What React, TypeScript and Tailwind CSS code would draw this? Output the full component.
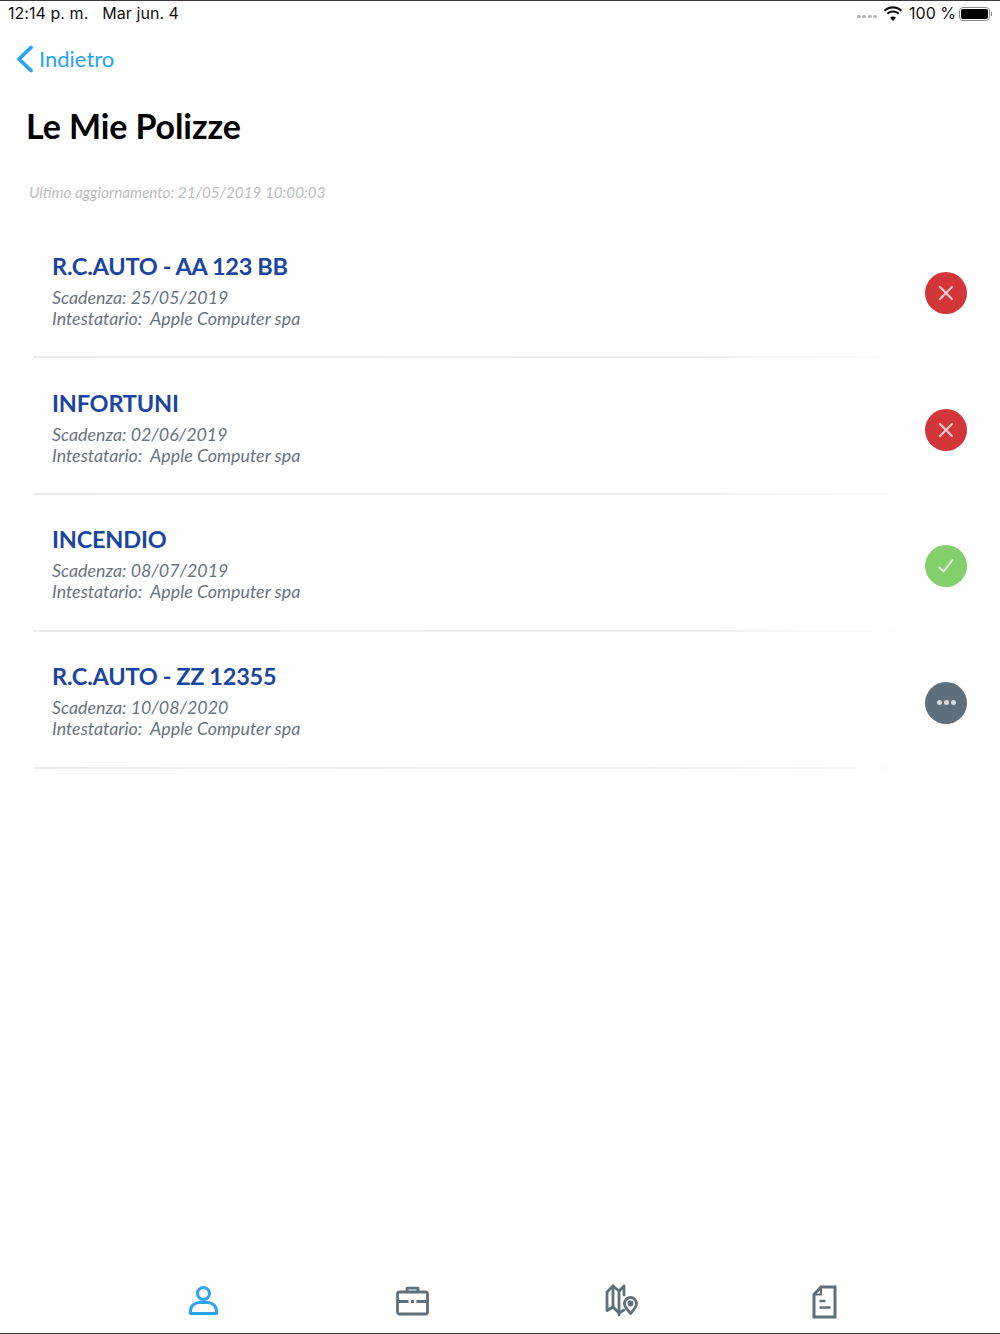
import React from "react";

const policies = [
  { title: "R.C.AUTO - AA 123 BB", date: "25/05/2019", status: "bad", lift: false },
  { title: "INFORTUNI", date: "02/06/2019", status: "bad", lift: false },
  { title: "INCENDIO", date: "08/07/2019", status: "ok", lift: true },
  { title: "R.C.AUTO - ZZ 12355", date: "10/08/2020", status: "pending", lift: true },
];

function StatusIcon({ status }: { status: string }) {
  if (status === "bad")
    return (
      <div className="mt-[8px] flex h-[42px] w-[42px] items-center justify-center rounded-full bg-[#d33639]">
        <svg width="16" height="16" viewBox="0 0 16 16" fill="none" stroke="#f3c6c7" strokeWidth="2.200" strokeLinecap="round">
          <path d="M2 2l12 12M14 2L2 14" />
        </svg>
      </div>
    );
  if (status === "ok")
    return (
      <div className="mt-[6px] flex h-[42px] w-[42px] items-center justify-center rounded-full bg-[#82cf6b]">
        <svg width="16" height="16" viewBox="0 0 16 16" fill="none" stroke="#e3f5dd" strokeWidth="2" strokeLinecap="round" strokeLinejoin="round">
          <path d="M1.500 9.500l4 4L14.500 2" />
        </svg>
      </div>
    );
  return (
    <div className="mt-[6px] flex h-[42px] w-[42px] items-center justify-center gap-[2px] rounded-full bg-[#5f6f7b]">
      <span className="h-[5px] w-[5px] rounded-full bg-[#d5dadd]" />
      <span className="h-[5px] w-[5px] rounded-full bg-[#d5dadd]" />
      <span className="h-[5px] w-[5px] rounded-full bg-[#d5dadd]" />
    </div>
  );
}

function Row({ title, date, status, lift }: { title: string; date: string; status: string; lift: boolean }) {
  return (
    <div className="flex h-[137px] flex-col">
      <div className="flex flex-1 items-center justify-between pl-[52px] pr-[33px]">
        <div className={lift ? "flex flex-col pt-[1px] font-['Lato',sans-serif]" : "flex flex-col pt-[3px] font-['Lato',sans-serif]"}>
          <div className="text-[23.5px] leading-[30px] font-bold text-[#1a46a0] tracking-[-0.2px] [word-spacing:-0.5px]">{title}</div>
          <div className="mt-[5px] text-[17.85px] leading-[22px] italic text-[#68757f]">Scadenza: {date}</div>
          <div className="-mt-[1px] text-[17.85px] leading-[22px] italic text-[#68757f] whitespace-pre">Intestatario:  Apple Computer spa</div>
        </div>
        <StatusIcon status={status} />
      </div>
      <div className="ml-[33px] h-[2px] w-[885px] bg-gradient-to-r from-[#e9ebec] via-[#eef0f0] via-75% to-white" />
    </div>
  );
}

export default function App() {
  return (
    <div className="flex h-[1334px] w-[1000px] flex-col border-y border-[#3a3a3a] bg-white">
      <div className="flex h-[25px] items-center justify-between pl-[8px] pr-[8px] font-['Inter',sans-serif] text-[16px] text-[#111]">
        <div className="mb-[2px] flex gap-[14px] whitespace-pre tracking-[0.05px]">
          <span>12:14 p. m.</span>
          <span>Mar jun. 4</span>
        </div>
        <div className="flex items-center">
          <div className="mr-[6px] mt-[6px] flex gap-[1.500px]">
            <span className="h-[3px] w-[4px] rounded-full bg-[#b5b5b5]" />
            <span className="h-[3px] w-[4px] rounded-full bg-[#b5b5b5]" />
            <span className="h-[3px] w-[4px] rounded-full bg-[#b5b5b5]" />
            <span className="h-[3px] w-[4px] rounded-full bg-[#b5b5b5]" />
          </div>
          <svg width="20" height="15" viewBox="0 0 20 15" className="mr-[6px]" fill="#111">
            <path d="M10 2.500c3 0 5.700 1.200 7.700 3.100l1.500-1.600C16.800 1.700 13.600.3 10 .3S3.200 1.700.8 4l1.500 1.600C4.300 3.700 7 2.500 10 2.500zM10 6.600c1.900 0 3.600.7 4.900 1.900l1.500-1.600C14.700 5.300 12.500 4.400 10 4.400s-4.700.9-6.400 2.500l1.500 1.600c1.300-1.200 3-1.900 4.900-1.900zM10 10.500c-1.200 0-2.200.4-3 1.200l3 3.200 3-3.200c-.8-.8-1.800-1.200-3-1.200z" />
          </svg>
          <span className="mb-[2px] mr-[3px]">100 %</span>
          <div className="flex items-center">
            <div className="h-[14px] w-[31px] rounded-[4px] border border-[#8a8a8a] p-[1px]">
              <div className="h-full w-full rounded-[2px] bg-black" />
            </div>
            <div className="ml-[1px] h-[4px] w-[1px] bg-[#8a8a8a]" />
          </div>
        </div>
      </div>

      <div className="mt-[16px] flex h-[34px] items-center pl-[16px] font-['Lato',sans-serif] text-[22px] text-[#29a4f5]">
        <svg width="18" height="28" viewBox="0 0 18 28" fill="none" stroke="#29a4f5" strokeWidth="3.800" strokeLinecap="round" strokeLinejoin="round">
          <path d="M15 2.500L3 14l12 11.500" />
        </svg>
        <span className="mb-[2px] ml-[5px]">Indietro</span>
      </div>

      <h1 className="mt-[28px] pl-[26px] font-['Lato',sans-serif] text-[34px] leading-[44px] font-bold text-black tracking-[-0.1px]">Le Mie Polizze</h1>

      <div className="mt-[33px] pl-[29px] font-['Lato',sans-serif] text-[15.25px] leading-[22px] italic text-[#bdbdbd]">
        Ultimo aggiornamento: 21/05/2019 10:00:03
      </div>

      <div className="mt-[18px] flex flex-col">
        {policies.map((p) => (
          <Row key={p.title} {...p} />
        ))}
      </div>

      <div className="mt-auto flex h-[64px] items-start">
        <div className="ml-[187px] mt-[16px]">
          <svg width="32" height="32" viewBox="0 0 32 32" fill="none" stroke="#29a4f5" strokeWidth="3">
            <circle cx="16.500" cy="8.500" r="6" />
            <path d="M3.500 28.500v-2.500c0-5 4-8.500 9-8.500h8c5 0 9 3.500 9 8.500v2.500z" strokeLinejoin="round" />
          </svg>
        </div>
        <div className="ml-[177px] mt-[17px]">
          <svg width="33" height="30" viewBox="0 0 33 30" fill="none" stroke="#5f6f7b" strokeWidth="2.800" strokeLinejoin="round">
            <rect x="1.500" y="6" width="30" height="22" rx="2" />
            <path d="M11 6V2.200h11V6M1.500 15.500h11M20.500 15.500h11M15 15.500h3" />
          </svg>
        </div>
        <div className="ml-[176px] mt-[14px]">
          <svg width="34" height="34" viewBox="0 0 34 34" fill="none" stroke="#5f6f7b" strokeWidth="2.800" strokeLinejoin="round" strokeLinecap="round">
            <path d="M19 12V3l-5 5-6-5-6 6v18.500l6-3.500 6 6 5-3" />
            <path d="M8 3v21M14 8v24" />
            <path d="M25.500 30.500c-3-3.500-6-6.500-6-10a6 6 0 0 1 12 0c0 3.500-3 6.500-6 10z" />
            <circle cx="25.500" cy="20.500" r="1.500" />
          </svg>
        </div>
        <div className="ml-[172px] mt-[16px]">
          <svg width="26" height="34" viewBox="0 0 26 34" fill="none" stroke="#5f6f7b" strokeWidth="3" strokeLinejoin="miter">
            <path d="M24 2v30H3V9.500L10 2z" />
            <path d="M10 2v7.500H3" strokeWidth="2" />
            <path d="M8.500 16h6M8.500 22.500h11" strokeWidth="2.500" />
          </svg>
        </div>
      </div>
    </div>
  );
}
